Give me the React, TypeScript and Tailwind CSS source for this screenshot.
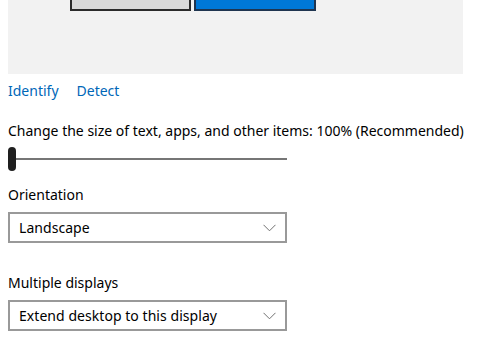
import React from 'react';

function Chevron() {
  return (
    <svg width="13" height="8" viewBox="0 0 13 8" className="mr-[9px]">
      <path d="M0.5 0.8 L6.5 6.8 L12.5 0.8" fill="none" stroke="#707070" strokeWidth="1" />
    </svg>
  );
}

function Dropdown({ value }: { value: string }) {
  return (
    <div className="mt-[7px] flex h-[31px] w-[279px] items-center justify-between border-2 border-[#999999] bg-white pl-[9px]">
      <span className="text-[14px] leading-5 tracking-[0.05px] text-black">{value}</span>
      <Chevron />
    </div>
  );
}

function App() {
  return (
    <div
      className="h-[340px] w-[491px] overflow-hidden bg-white text-black"
      style={{ fontFamily: '"Noto Sans", "Open Sans", sans-serif' }}
    >
      {/* display arrangement preview */}
      <div className="ml-2 flex h-[74px] w-[455px] items-start gap-[3px] bg-[#f2f2f2] pl-[62px]">
        <div className="h-[11px] w-[121px] border-2 border-t-0 border-[#2b2b2b] bg-[#d9d9d9]" />
        <div className="h-[11px] w-[122px] border-2 border-t-0 border-[#1f3550] bg-[#0078d7]" />
      </div>

      <div className="mt-[7px] flex gap-[18px] pl-2 text-[14px] leading-5 text-[#0067b8]">
        <span>Identify</span>
        <span>Detect</span>
      </div>

      <div className="mt-[20px] pl-2 text-[14px] leading-5 whitespace-nowrap">
        Change the size of text, apps, and other items: 100% (Recommended)
      </div>

      <div className="mt-[6px] flex h-6 items-center pl-2">
        <div className="h-6 w-2 shrink-0 rounded-full bg-[#1f1f1f]" />
        <div className="h-[2px] w-[271px] shrink-0 bg-[#767676]" />
      </div>

      <div className="pl-2">
        <div className="mt-[14px] text-[14px] leading-5">Orientation</div>
        <Dropdown value="Landscape" />

        <div className="mt-[30px] text-[14px] leading-5">Multiple displays</div>
        <Dropdown value="Extend desktop to this display" />
      </div>
    </div>
  );
}

export default App;
